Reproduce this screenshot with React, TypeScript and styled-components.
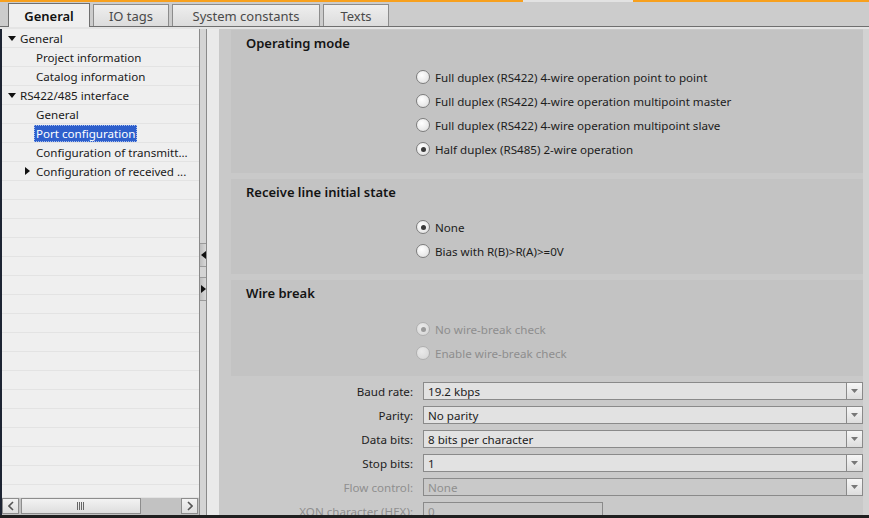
import React from "react";
import styled, { createGlobalStyle, css } from "styled-components";

const Global = createGlobalStyle`
  html, body { margin: 0; padding: 0; background: #cbcbcb; }
  body { font-family: "Noto Sans", "DejaVu Sans", sans-serif; font-size: 11.6px; color: #1e1e1e; }
  * { box-sizing: border-box; }
`;

const Frame = styled.div`
  width: 869px;
  height: 518px;
  display: flex;
  flex-direction: column;
  overflow: hidden;
  background: #cbcbcb;
`;

const Stripe = styled.div`
  height: 2px;
  display: flex;
  flex: none;
`;

const StripeSeg = styled.div<{ $w?: number; $light?: boolean }>`
  height: 2px;
  background: ${(p) => (p.$light ? "#e2e2e2" : "#f7a01e")};
  ${(p) => (p.$w ? css`width: ${p.$w}px; flex: none;` : css`flex: 1;`)}
`;

const TabBar = styled.div`
  height: 25px;
  flex: none;
  display: flex;
  align-items: flex-end;
  gap: 3px;
  padding-left: 8px;
  background: #cccccc;
  border-bottom: 1px solid #6f6f6f;
`;

const Tab = styled.div<{ $active?: boolean; $w: number }>`
  width: ${(p) => p.$w}px;
  height: 22px;
  display: flex;
  align-items: center;
  justify-content: center;
  font-size: 13px;
  border: 1px solid #8c8c8c;
  border-bottom: none;
  background: linear-gradient(#eeeeee, #dcdcdc);
  color: #4a4a4a;
  ${(p) =>
    p.$active &&
    css`
      height: 24px;
      margin-bottom: -1px;
      background: #efefef;
      color: #111;
      font-weight: 600;
      border-color: #6f6f6f;
    `}
`;

const Body = styled.div`
  flex: 1;
  display: flex;
  min-height: 0;
  border-top: 2px solid #e4e4e4;
`;

const BottomBar = styled.div`
  height: 3px;
  flex: none;
  background: #1f1f1f;
`;

const LeftPane = styled.div`
  width: 199px;
  flex: none;
  display: flex;
  flex-direction: column;
  background: #efefef;
  border-left: 2px solid #1d2433;
`;

const Tree = styled.div`
  flex: 1;
  overflow: hidden;
`;

const Row = styled.div<{ $indent: number }>`
  height: 19px;
  display: flex;
  align-items: center;
  border-bottom: 1px solid #e3e3e3;
  padding-left: ${(p) => p.$indent}px;
  white-space: nowrap;
  color: #1a1a1a;
`;

const Arrow = styled.span<{ $w: number }>`
  width: ${(p) => p.$w}px;
  display: inline-flex;
  align-items: center;
  justify-content: flex-start;
  flex: none;
`;

const Label = styled.span<{ $selected?: boolean }>`
  padding: 1px 2px;
  ${(p) =>
    p.$selected &&
    css`
      background: #2e5fcc;
      color: #fff;
      outline: 1px dotted #a9c0ee;
      outline-offset: -1px;
    `}
`;

const HScroll = styled.div`
  height: 18px;
  flex: none;
  display: flex;
  align-items: stretch;
  gap: 2px;
  padding: 0 1px 1px 0;
  background: #c2c2c2;
  border-top: 1px solid #e3e3e3;
`;

const ScrollBtn = styled.div<{ $w: number }>`
  width: ${(p) => p.$w}px;
  flex: none;
  display: flex;
  align-items: center;
  justify-content: center;
  background: linear-gradient(#f3f3f3, #dedede);
  border: 1px solid #8d8d8d;
  color: #555;
`;

const Track = styled.div`
  flex: 1;
`;

const Splitter = styled.div`
  width: 8px;
  flex: none;
  display: flex;
  flex-direction: column;
  align-items: stretch;
  background: #d4d4d4;
  border-left: 1px solid #8a8a8a;
  border-right: 1px solid #8a8a8a;
  padding-top: 214px;
  gap: 10px;
`;

const SplitBtn = styled.div`
  height: 24px;
  display: flex;
  align-items: center;
  justify-content: center;
  background: linear-gradient(90deg, #bdbdbd, #d8d8d8);
  border-top: 1px solid #9a9a9a;
  border-bottom: 1px solid #9a9a9a;
`;

const Gutter = styled.div`
  width: 12px;
  flex: none;
  background: #eaeaea;
`;

const Content = styled.div`
  flex: 1;
  display: flex;
  flex-direction: column;
  gap: 6px;
  padding: 1px 0 0 12px;
  background: #c9c9c9;
  min-width: 0;
`;

const RightStrip = styled.div`
  width: 6px;
  flex: none;
  background: #d2d2d2;
`;

const Section = styled.div<{ $h: number }>`
  height: ${(p) => p.$h}px;
  flex: none;
  background: #c3c3c3;
  padding: 5px 0 0 15px;
`;

const SectionTitle = styled.div`
  height: 16px;
  font-size: 13px;
  font-weight: 600;
  color: #141414;
  line-height: 16px;
`;

const Options = styled.div<{ $top: number }>`
  margin-top: ${(p) => p.$top}px;
  padding-left: 170px;
  display: flex;
  flex-direction: column;
  gap: 8px;
`;

const RadioRow = styled.div<{ $disabled?: boolean }>`
  height: 16px;
  display: flex;
  align-items: center;
  gap: 5px;
  color: ${(p) => (p.$disabled ? "#8e8e8e" : "#1c1c1c")};
  white-space: nowrap;
`;

const RadioCircle = styled.span<{ $checked?: boolean; $disabled?: boolean }>`
  width: 14px;
  height: 14px;
  border-radius: 50%;
  flex: none;
  display: flex;
  align-items: center;
  justify-content: center;
  border: 1px solid ${(p) => (p.$disabled ? "#b0b0b0" : "#7d7d7d")};
  background: ${(p) =>
    p.$disabled
      ? "radial-gradient(circle at 40% 35%, #eaeaea, #d4d4d4)"
      : "radial-gradient(circle at 40% 35%, #ffffff, #dcdcdc)"};
  &::after {
    content: "";
    width: 5px;
    height: 5px;
    border-radius: 50%;
    background: ${(p) => (p.$disabled ? "#9a9a9a" : "#3a3a3a")};
    display: ${(p) => (p.$checked ? "block" : "none")};
  }
`;

const Form = styled.div`
  display: flex;
  flex-direction: column;
  gap: 6px;
`;

const FormRow = styled.div`
  height: 18px;
  display: grid;
  grid-template-columns: 182px 1fr;
  column-gap: 10px;
  align-items: center;
`;

const FormLabel = styled.div<{ $disabled?: boolean }>`
  text-align: right;
  color: ${(p) => (p.$disabled ? "#8f8f8f" : "#1c1c1c")};
  white-space: nowrap;
`;

const Field = styled.div<{ $disabled?: boolean; $w?: number }>`
  height: 18px;
  display: flex;
  align-items: stretch;
  border: 1px solid #8a8a8a;
  background: ${(p) => (p.$disabled ? "#c9c9c9" : "#e2e2e2")};
  color: ${(p) => (p.$disabled ? "#8f8f8f" : "#1c1c1c")};
  ${(p) => p.$w && css`width: ${p.$w}px;`}
`;

const FieldText = styled.div`
  flex: 1;
  display: flex;
  align-items: center;
  padding-left: 4px;
`;

const DropBtn = styled.div`
  width: 16px;
  flex: none;
  display: flex;
  align-items: center;
  justify-content: center;
  border-left: 1px solid #8a8a8a;
  background: linear-gradient(#f6f6f6, #dddddd);
`;

const Down = () => (
  <svg width="8" height="5" viewBox="0 0 8 5">
    <path d="M0 0h8L4 5z" fill="#111" />
  </svg>
);
const Right = () => (
  <svg width="5" height="8" viewBox="0 0 5 8">
    <path d="M0 0l5 4-5 4z" fill="#111" />
  </svg>
);
const Left = () => (
  <svg width="5" height="8" viewBox="0 0 5 8">
    <path d="M5 0L0 4l5 4z" fill="#111" />
  </svg>
);
const Caret = () => (
  <svg width="7" height="4" viewBox="0 0 7 4">
    <path d="M0 0h7L3.5 4z" fill="#777" />
  </svg>
);
const Chev = ({ dir }: { dir: "l" | "r" }) => (
  <svg width="6" height="10" viewBox="0 0 6 10">
    <path d={dir === "l" ? "M5 1L1 5l4 4" : "M1 1l4 4-4 4"} stroke="#555" strokeWidth="1.6" fill="none" />
  </svg>
);
const Grip = () => (
  <svg width="8" height="8" viewBox="0 0 8 8">
    {[0, 2, 4, 6].map((x) => (
      <rect key={x} x={x} y="0" width="1" height="8" fill="#666" />
    ))}
  </svg>
);

const treeRows: { text: string; indent: number; arrow?: "down" | "right"; selected?: boolean }[] = [
  { text: "General", indent: 6, arrow: "down" },
  { text: "Project information", indent: 32 },
  { text: "Catalog information", indent: 32 },
  { text: "RS422/485 interface", indent: 6, arrow: "down" },
  { text: "General", indent: 32 },
  { text: "Port configuration", indent: 32, selected: true },
  { text: "Configuration of transmitt...", indent: 32 },
  { text: "Configuration of received ...", indent: 23, arrow: "right" },
];

const Radio = ({ label, checked, disabled }: { label: string; checked?: boolean; disabled?: boolean }) => (
  <RadioRow $disabled={disabled}>
    <RadioCircle $checked={checked} $disabled={disabled} />
    {label}
  </RadioRow>
);

const formRows = [
  { label: "Baud rate:", value: "19.2 kbps" },
  { label: "Parity:", value: "No parity" },
  { label: "Data bits:", value: "8 bits per character" },
  { label: "Stop bits:", value: "1" },
  { label: "Flow control:", value: "None", disabled: true },
];

export default function App() {
  const emptyRows = Array.from({ length: 16 });
  return (
    <Frame>
      <Global />
      <Stripe>
        <StripeSeg $w={523} />
        <StripeSeg $w={110} $light />
        <StripeSeg />
      </Stripe>
      <TabBar>
        <Tab $w={82} $active>General</Tab>
        <Tab $w={76}>IO tags</Tab>
        <Tab $w={148}>System constants</Tab>
        <Tab $w={66}>Texts</Tab>
      </TabBar>
      <Body>
        <LeftPane>
          <Tree>
            {treeRows.map((r, i) => (
              <Row key={i} $indent={r.indent}>
                {r.arrow && (
                  <Arrow $w={r.arrow === "down" ? 10 : 9}>
                    {r.arrow === "down" ? <Down /> : <Right />}
                  </Arrow>
                )}
                <Label $selected={r.selected}>{r.text}</Label>
              </Row>
            ))}
            {emptyRows.map((_, i) => (
              <Row key={"e" + i} $indent={0} />
            ))}
          </Tree>
          <HScroll>
            <ScrollBtn $w={17}><Chev dir="l" /></ScrollBtn>
            <ScrollBtn $w={120}><Grip /></ScrollBtn>
            <Track />
            <ScrollBtn $w={17}><Chev dir="r" /></ScrollBtn>
          </HScroll>
        </LeftPane>
        <Splitter>
          <SplitBtn><Left /></SplitBtn>
          <SplitBtn><Right /></SplitBtn>
        </Splitter>
        <Gutter />
        <Content>
          <Section $h={143}>
            <SectionTitle>Operating mode</SectionTitle>
            <Options $top={18}>
              <Radio label="Full duplex (RS422) 4-wire operation point to point" />
              <Radio label="Full duplex (RS422) 4-wire operation multipoint master" />
              <Radio label="Full duplex (RS422) 4-wire operation multipoint slave" />
              <Radio label="Half duplex (RS485) 2-wire operation" checked />
            </Options>
          </Section>
          <Section $h={95}>
            <SectionTitle>Receive line initial state</SectionTitle>
            <Options $top={19}>
              <Radio label="None" checked />
              <Radio label="Bias with R(B)>R(A)>=0V" />
            </Options>
          </Section>
          <Section $h={96}>
            <SectionTitle>Wire break</SectionTitle>
            <Options $top={20}>
              <Radio label="No wire-break check" checked disabled />
              <Radio label="Enable wire-break check" disabled />
            </Options>
          </Section>
          <Form>
            {formRows.map((f) => (
              <FormRow key={f.label}>
                <FormLabel $disabled={f.disabled}>{f.label}</FormLabel>
                <Field $disabled={f.disabled}>
                  <FieldText>{f.value}</FieldText>
                  <DropBtn><Caret /></DropBtn>
                </Field>
              </FormRow>
            ))}
            <FormRow>
              <FormLabel $disabled>XON character (HEX):</FormLabel>
              <Field $disabled $w={180}>
                <FieldText>0</FieldText>
              </Field>
            </FormRow>
          </Form>
        </Content>
        <RightStrip />
      </Body>
      <BottomBar />
    </Frame>
  );
}
